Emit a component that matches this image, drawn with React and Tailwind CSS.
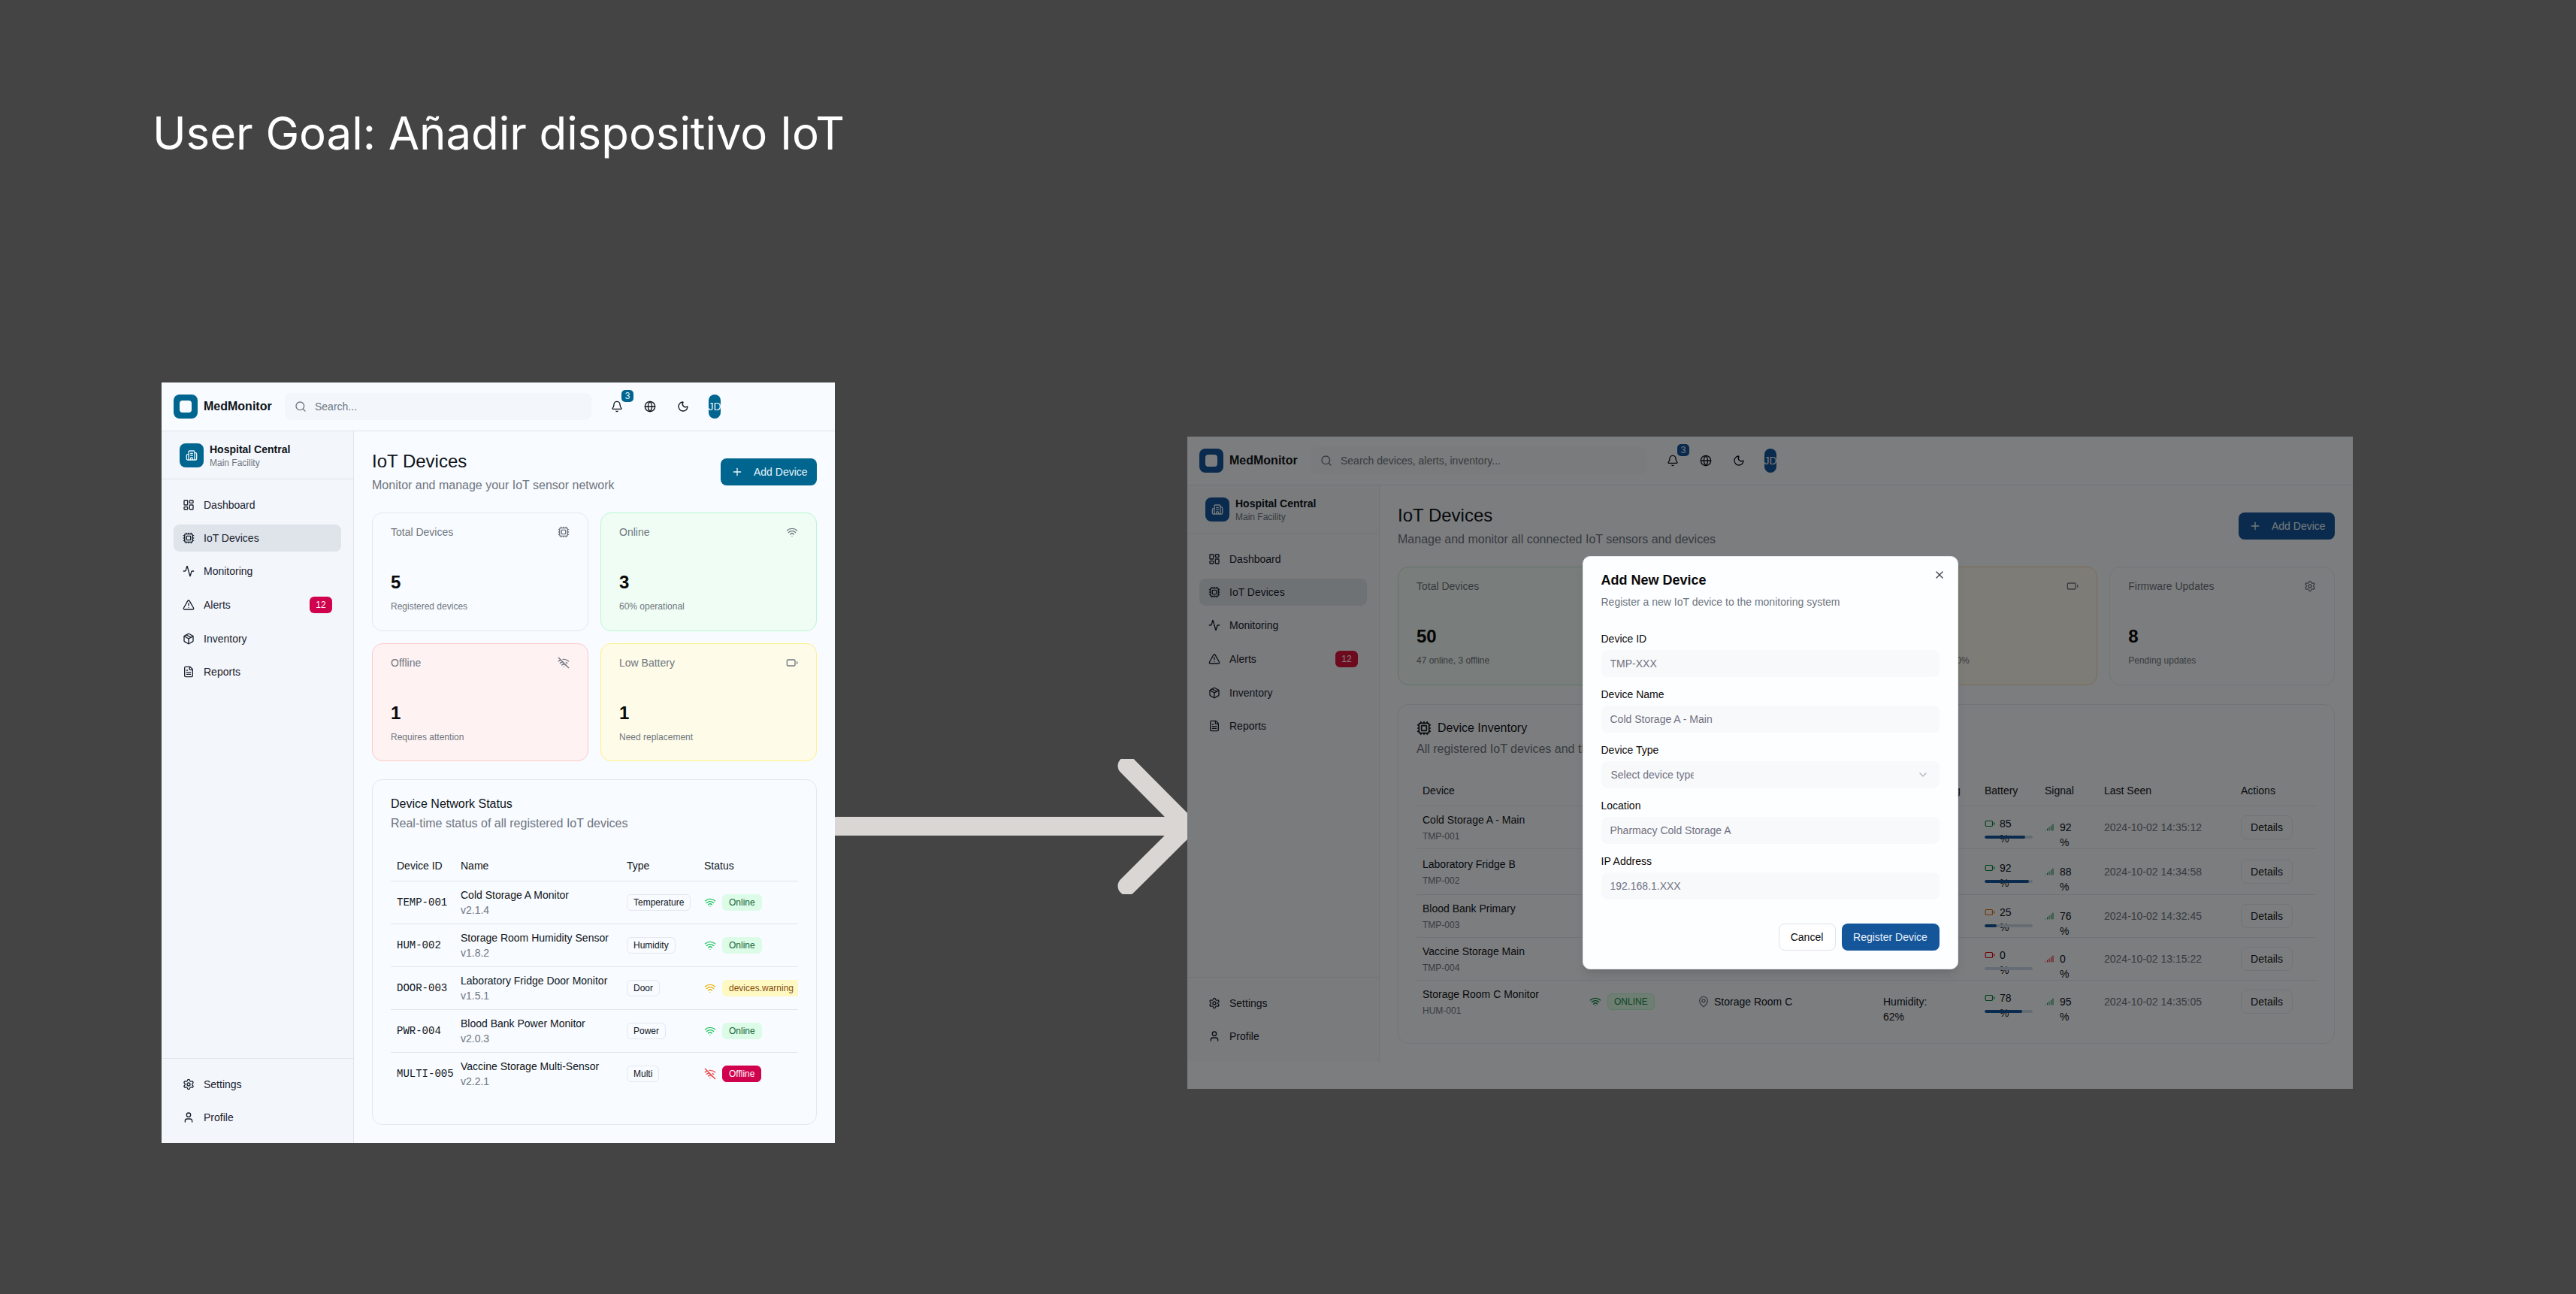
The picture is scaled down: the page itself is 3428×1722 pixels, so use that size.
import {
  Activity, Battery, Bell, Building2, ChevronDown, Cpu, FileText, Globe, LayoutDashboard, MapPin,
  Moon, Package, Plus, Search, Settings, Signal, TriangleAlert, User, Wifi, WifiOff, X,
} from 'lucide-react';

const navItems = [
  { label: 'Dashboard', icon: LayoutDashboard },
  { label: 'IoT Devices', icon: Cpu, active: true },
  { label: 'Monitoring', icon: Activity },
  { label: 'Alerts', icon: TriangleAlert, badge: '12' },
  { label: 'Inventory', icon: Package },
  { label: 'Reports', icon: FileText },
];

const networkDevices = [
  { id: 'TEMP-001', name: 'Cold Storage A Monitor', version: 'v2.1.4', type: 'Temperature', status: 'online' },
  { id: 'HUM-002', name: 'Storage Room Humidity Sensor', version: 'v1.8.2', type: 'Humidity', status: 'online' },
  { id: 'DOOR-003', name: 'Laboratory Fridge Door Monitor', version: 'v1.5.1', type: 'Door', status: 'warning' },
  { id: 'PWR-004', name: 'Blood Bank Power Monitor', version: 'v2.0.3', type: 'Power', status: 'online' },
  { id: 'MULTI-005', name: 'Vaccine Storage Multi-Sensor', version: 'v2.2.1', type: 'Multi', status: 'offline' },
];

const inventory = [
  { name: 'Cold Storage A - Main', id: 'TMP-001', status: 'ONLINE', location: 'Pharmacy Cold Storage A', reading: 'Temp: 4.2°C', battery: 85, signal: 92, seen: '2024-10-02 14:35:12', tone: 'text-green-700', row: 'h-[57px]' },
  { name: 'Laboratory Fridge B', id: 'TMP-002', status: 'ONLINE', location: 'Laboratory Room 2', reading: 'Temp: 3.8°C', battery: 92, signal: 88, seen: '2024-10-02 14:34:58', tone: 'text-green-700', row: 'h-[61px]' },
  { name: 'Blood Bank Primary', id: 'TMP-003', status: 'ONLINE', location: 'Blood Bank', reading: 'Temp: 2.1°C', battery: 25, signal: 76, seen: '2024-10-02 14:32:45', tone: 'text-amber-600', row: 'h-[57px]' },
  { name: 'Vaccine Storage Main', id: 'TMP-004', status: 'OFFLINE', location: 'Vaccine Storage', reading: 'Temp: 5.0°C', battery: 0, signal: 0, seen: '2024-10-02 13:15:22', tone: 'text-red-600', row: 'h-[57px]' },
  { name: 'Storage Room C Monitor', id: 'HUM-001', status: 'ONLINE', location: 'Storage Room C', reading: 'Humidity: 62%', battery: 78, signal: 95, seen: '2024-10-02 14:35:05', tone: 'text-green-700', row: 'h-[57px]' },
];

const Header = ({ brand, searchWidth, placeholder }) => (
  <header className="h-[65px] shrink-0 flex items-center px-4 border-b border-[#e2e6ec]">
    <div className={`w-8 h-8 rounded-lg flex items-center justify-center ${brand}`}>
      <div className="w-4 h-4 rounded-[4px] bg-[#f8fbff]" />
    </div>
    <span className="ml-2 w-[90px] text-base font-bold text-[#0f1419] whitespace-nowrap">MedMonitor</span>
    <div className={`ml-[18px] h-9 rounded-lg bg-[#f3f6fa] flex items-center pl-[13px] gap-[11px] ${searchWidth}`}>
      <Search size={16} className="text-[#6f7680] shrink-0" />
      <input placeholder={placeholder} className="flex-1 min-w-0 bg-transparent text-sm outline-none placeholder:text-[#6f7680]" />
    </div>
    <div className="ml-4 flex items-center gap-2">
      <button className="relative w-9 h-9 flex items-center justify-center text-[#0f1419]">
        <Bell size={16} />
        <span className={`absolute top-[-4px] right-[-4px] w-4 h-4 rounded-[5px] text-xs leading-4 text-center text-[#e8f4f9] ${brand}`}>3</span>
      </button>
      <button className="w-9 h-9 flex items-center justify-center text-[#0f1419]"><Globe size={16} /></button>
      <button className="w-9 h-9 flex items-center justify-center text-[#0f1419]"><Moon size={16} /></button>
    </div>
    <div className={`ml-4 w-4 h-8 rounded-full flex items-center justify-center text-sm text-[#e8f4f9] ${brand}`}>JD</div>
  </header>
);

const NavRow = ({ item, active, badgeColor }) => {
  const Icon = item.icon;
  return (
    <a className={`flex items-center gap-3 px-3 py-2 rounded-lg text-sm leading-5 text-[#1a2230] ${active ? 'bg-[#dee4ea]' : ''}`}>
      <Icon size={16} className="shrink-0" />
      <span>{item.label}</span>
      {item.badge && (
        <span className={`ml-auto w-[30px] h-[22px] rounded-md text-xs leading-[22px] text-center text-white ${badgeColor}`}>{item.badge}</span>
      )}
    </a>
  );
};

const Sidebar = ({ brand, badgeColor }) => (
  <aside className="w-64 shrink-0 flex flex-col bg-[#f3f6fa] border-r border-[#e2e6ec]">
    <div className="h-16 shrink-0 flex items-center gap-2 px-6 border-b border-[#e2e6ec]">
      <div className={`w-8 h-8 rounded-lg flex items-center justify-center text-[#e8f4f9] ${brand}`}>
        <Building2 size={16} />
      </div>
      <div>
        <div className="text-sm leading-5 font-bold text-[#0f1419]">Hospital Central</div>
        <div className="text-xs leading-4 text-[#6f7680]">Main Facility</div>
      </div>
    </div>
    <nav className="flex-1 p-4 flex flex-col gap-2">
      {navItems.map((item) => (
        <NavRow key={item.label} item={item} active={item.active} badgeColor={badgeColor} />
      ))}
    </nav>
    <div className="p-4 flex flex-col gap-2 border-t border-[#e2e6ec]">
      <NavRow item={{ label: 'Settings', icon: Settings }} />
      <NavRow item={{ label: 'Profile', icon: User }} />
    </div>
  </aside>
);

const PageTitle = ({ brand, text }) => (
  <div className="flex items-center justify-between">
    <div>
      <h1 className="text-2xl leading-8 text-[#0f1419]">IoT Devices</h1>
      <p className="mt-1 text-base leading-6 text-[#6f7680]">{text}</p>
    </div>
    <button className={`w-32 h-9 rounded-lg flex items-center pl-[14px] gap-[14px] text-sm text-[#e8f4f9] ${brand}`}>
      <Plus size={16} />
      <span>Add Device</span>
    </button>
  </div>
);

const StatCard = ({ label, value, note, icon: Icon, tone }) => (
  <div className={`h-[157.5px] rounded-[14px] border px-6 pt-[15px] ${tone}`}>
    <div className="flex items-center justify-between text-sm leading-5 text-[#6f7680]">
      <span>{label}</span>
      <Icon size={16} />
    </div>
    <div className="mt-[41px] text-2xl leading-8 font-bold text-[#0a0a0a]">{value}</div>
    <div className="mt-2 text-xs leading-4 text-[#6f7680]">{note}</div>
  </div>
);

const statusBadge = {
  online: { text: 'Online', badge: 'bg-[#dcfce7] border-[#dcfce7] text-[#166534]', wifi: 'text-[#22c55e]' },
  warning: { text: 'devices.warning', badge: 'bg-[#fef9c3] border-[#fef9c3] text-[#854d0e]', wifi: 'text-[#eab308]' },
  offline: { text: 'Offline', badge: 'bg-[#d0024e] border-[#d0024e] text-white', wifi: 'text-[#ef4444]' },
};

const NetworkTable = () => (
  <div className="mt-6 flex-1 rounded-[14px] border border-[#e4e8ee] px-6 pt-5">
    <h2 className="text-base leading-6 text-[#0f1419]">Device Network Status</h2>
    <p className="mt-0.5 text-base leading-6 text-[#6f7680]">Real-time status of all registered IoT devices</p>
    <div className="mt-6 overflow-hidden">
      <table className="w-[542px] table-fixed border-collapse text-sm text-[#0f1419]">
        <colgroup>
          <col className="w-[85px]" />
          <col className="w-[221px]" />
          <col className="w-[103px]" />
          <col className="w-[133px]" />
        </colgroup>
        <thead>
          <tr className="h-10 border-b border-[#e2e6ec] text-left">
            <th className="px-2 font-normal">Device ID</th>
            <th className="px-2 font-normal">Name</th>
            <th className="px-2 font-normal">Type</th>
            <th className="px-2 font-normal">Status</th>
          </tr>
        </thead>
        <tbody>
          {networkDevices.map((d, i) => {
            const s = statusBadge[d.status];
            return (
              <tr key={d.id} className={i < networkDevices.length - 1 ? 'border-b border-[#e2e6ec]' : ''}>
                <td className="px-2 py-2 font-['Liberation_Mono',monospace] whitespace-nowrap">{d.id}</td>
                <td className="px-2 py-2 whitespace-nowrap">
                  <div className="leading-5">{d.name}</div>
                  <div className="leading-5 text-[#6f7680]">{d.version}</div>
                </td>
                <td className="px-2 py-2">
                  <span className="inline-block h-[22px] rounded-md border border-[#e4e8ee] px-2 text-xs leading-5 whitespace-nowrap">{d.type}</span>
                </td>
                <td className="px-2 py-2">
                  <div className="flex items-center gap-2">
                    <span className={`shrink-0 ${s.wifi}`}>
                      {d.status === 'offline' ? <WifiOff size={16} /> : <Wifi size={16} />}
                    </span>
                    <span className={`h-[22px] shrink-0 rounded-md border px-2 text-xs leading-5 whitespace-nowrap ${s.badge}`}>{s.text}</span>
                  </div>
                </td>
              </tr>
            );
          })}
        </tbody>
      </table>
    </div>
  </div>
);

const InventoryTable = ({ brand }) => (
  <div className="mt-[25px] flex-1 rounded-[14px] border border-[#e4e8ee] px-6 pt-[19px]">
    <h2 className="flex items-center gap-2 text-base leading-6 text-[#0f1419]">
      <Cpu size={20} />
      <span>Device Inventory</span>
    </h2>
    <p className="mt-1 text-base leading-6 text-[#6f7680]">All registered IoT devices and their current status</p>
    <table className="mt-6 w-[1197px] table-fixed border-collapse text-sm text-[#0f1419]">
      <colgroup>
        <col className="w-[222px]" />
        <col className="w-[144px]" />
        <col className="w-[247px]" />
        <col className="w-[135px]" />
        <col className="w-[80px]" />
        <col className="w-[79px]" />
        <col className="w-[182px]" />
        <col className="w-[108px]" />
      </colgroup>
      <thead>
        <tr className="h-10 border-b border-[#e2e6ec] text-left">
          {['Device', 'Status', 'Location', 'Current Reading', 'Battery', 'Signal', 'Last Seen', 'Actions'].map((h) => (
            <th key={h} className="px-2 font-normal whitespace-nowrap">{h}</th>
          ))}
        </tr>
      </thead>
      <tbody>
        {inventory.map((d, i) => (
          <tr key={d.id} className={`${d.row} ${i < inventory.length - 1 ? 'border-b border-[#e2e6ec]' : ''}`}>
            <td className="px-2">
              <div className="leading-5">{d.name}</div>
              <div className="mt-1 text-xs leading-4 text-[#6f7680]">{d.id}</div>
            </td>
            <td className="px-2">
              <div className="flex items-center gap-2">
                <Wifi size={16} className={d.status === 'ONLINE' ? 'text-green-700' : 'text-red-600'} />
                <span className="h-[22px] rounded-md border border-[#bbf7d0] bg-[#dcfce7] px-2 text-xs leading-5 text-[#1a8a45]">{d.status}</span>
              </div>
            </td>
            <td className="px-2">
              <div className="flex items-center gap-1.5 pl-0">
                <MapPin size={16} className="text-[#6f7680] shrink-0" />
                <span className="whitespace-nowrap">{d.location}</span>
              </div>
            </td>
            <td className="px-2">
              <div className="h-5 w-[80px]">{d.reading}</div>
            </td>
            <td className="px-2">
              <div className="flex h-5 gap-[6px] items-start leading-5">
                <Battery size={14} className={`mt-[3px] shrink-0 ${d.tone}`} />
                <span className="w-5">{d.battery} %</span>
              </div>
              <div className="relative mt-1.5 h-1 rounded-full bg-[#cad8e8] overflow-hidden">
                <div className={`h-full rounded-full ${brand}`} style={{ width: `${d.battery}%` }} />
              </div>
            </td>
            <td className="px-2">
              <div className="flex h-5 gap-2 items-start leading-5">
                <Signal size={12} className={`mt-1 shrink-0 ${d.signal === 0 ? 'text-red-600' : 'text-green-700'}`} />
                <span className="w-5">{d.signal} %</span>
              </div>
            </td>
            <td className="px-2 text-[#6f7680] whitespace-nowrap">{d.seen}</td>
            <td className="px-2">
              <button className="w-[69px] h-8 rounded-lg border border-[#e4e8ee] text-sm text-[#0f1419]">Details</button>
            </td>
          </tr>
        ))}
      </tbody>
    </table>
  </div>
);

const Field = ({ label, placeholder }) => (
  <div>
    <label className="block text-sm leading-[14px] text-[#0a0a0a]">{label}</label>
    <input placeholder={placeholder} className="mt-2 w-full h-9 rounded-lg bg-[#f8f9fb] px-3 text-sm outline-none placeholder:text-[#717182]" />
  </div>
);

const AddDeviceModal = () => (
  <div className="absolute inset-0 bg-black/50 flex items-center justify-center">
    <div className="relative w-[500px] h-[550px] rounded-[10px] border border-[#e4e8ee] bg-[#fdfeff] p-6 shadow-lg">
      <button className="absolute top-4 right-4 text-[#3a3f47]"><X size={16} /></button>
      <h2 className="text-lg leading-[14px] font-bold text-[#0a0a0a]">Add New Device</h2>
      <p className="mt-3 text-sm leading-5 text-[#6f7680]">Register a new IoT device to the monitoring system</p>
      <div className="mt-8 flex flex-col gap-4">
        <Field label="Device ID" placeholder="TMP-XXX" />
        <Field label="Device Name" placeholder="Cold Storage A - Main" />
        <div>
          <label className="block text-sm leading-[14px] text-[#0a0a0a]">Device Type</label>
          <button className="mt-2 w-full h-9 rounded-lg bg-[#f8f9fb] pl-[13px] pr-[14px] flex items-center justify-between text-sm text-[#717182]">
            <span className="w-[110px] overflow-hidden whitespace-nowrap text-left">Select device type</span>
            <ChevronDown size={16} className="opacity-50" />
          </button>
        </div>
        <Field label="Location" placeholder="Pharmacy Cold Storage A" />
        <Field label="IP Address" placeholder="192.168.1.XXX" />
      </div>
      <div className="mt-8 flex justify-end gap-2">
        <button className="w-[76px] h-9 rounded-lg border border-[#dfe2e6] bg-white text-sm text-[#0a0a0a]">Cancel</button>
        <button className="w-[130px] h-9 rounded-lg bg-[#15569b] text-sm text-[#eaf2fa]">Register Device</button>
      </div>
    </div>
  </div>
);

const App = () => (
  <div className="relative w-[3428px] h-[1722px] overflow-hidden bg-[#444444] font-['Liberation_Sans',Arial,sans-serif]">
    <h1 className="pl-[203px] pt-[141px] font-['Inter',sans-serif] text-[60px] leading-[72px] tracking-[-0.07px] text-white">User Goal: Añadir dispositivo IoT</h1>

    {/* connector between the two screens, sits under the right one */}
    <svg className="absolute left-[1111px] top-[1010px]" width="500" height="180" fill="none" stroke="#d9d6d4" strokeWidth="25">
      <path d="M0 89.5H469" />
      <path d="M389 9L469 89.5L389 169" strokeLinecap="round" strokeLinejoin="round" />
    </svg>

    <div className="mt-[296px] ml-[215px] flex items-start">
      <div className="relative w-[896px] h-[1012px] flex flex-col bg-[#f8fbff]">
        <Header brand="bg-[#00658f]" searchWidth="w-[408px]" placeholder="Search..." />
        <div className="flex flex-1 min-h-0">
          <Sidebar brand="bg-[#00658f]" badgeColor="bg-[#d0024e]" />
          <main className="flex-1 min-w-0 p-6 flex flex-col">
            <PageTitle brand="bg-[#00658f]" text="Monitor and manage your IoT sensor network" />
            <div className="mt-6 grid grid-cols-2 gap-4">
              <StatCard label="Total Devices" value="5" note="Registered devices" icon={Cpu} tone="border-[#e4e8ee]" />
              <StatCard label="Online" value="3" note="60% operational" icon={Wifi} tone="bg-[#f0fdf4] border-[#bbf7d0]" />
              <StatCard label="Offline" value="1" note="Requires attention" icon={WifiOff} tone="bg-[#fef2f2] border-[#fecaca]" />
              <StatCard label="Low Battery" value="1" note="Need replacement" icon={Battery} tone="bg-[#fefce8] border-[#fef08a]" />
            </div>
            <NetworkTable />
          </main>
        </div>
      </div>

      <div className="relative mt-[72px] ml-[469px] w-[1551px] h-[868px] bg-[#f8fbff]">
        <Header brand="bg-[#15569b]" searchWidth="w-[448px]" placeholder="Search devices, alerts, inventory..." />
        <div className="flex h-[767px]">
          <Sidebar brand="bg-[#15569b]" badgeColor="bg-[#dc143c]" />
          <main className="flex-1 min-w-0 p-6 flex flex-col">
            <PageTitle brand="bg-[#15569b]" text="Manage and monitor all connected IoT sensors and devices" />
            <div className="mt-6 grid grid-cols-4 gap-4">
              <StatCard label="Total Devices" value="50" note="47 online, 3 offline" icon={Cpu} tone="bg-[#f3fbf6] border-[#c5e8d0]" />
              <StatCard label="Active Alerts" value="12" note="3 critical" icon={TriangleAlert} tone="bg-[#fef2f2] border-[#fecaca]" />
              <StatCard label="Low Battery" value="5" note="Devices under 20%" icon={Battery} tone="bg-[#fcf8ee] border-[#f3d9b0]" />
              <StatCard label="Firmware Updates" value="8" note="Pending updates" icon={Settings} tone="border-[#e4e8ee]" />
            </div>
            <InventoryTable brand="bg-[#15569b]" />
          </main>
        </div>
        <AddDeviceModal />
      </div>
    </div>
  </div>
);

export default App;
